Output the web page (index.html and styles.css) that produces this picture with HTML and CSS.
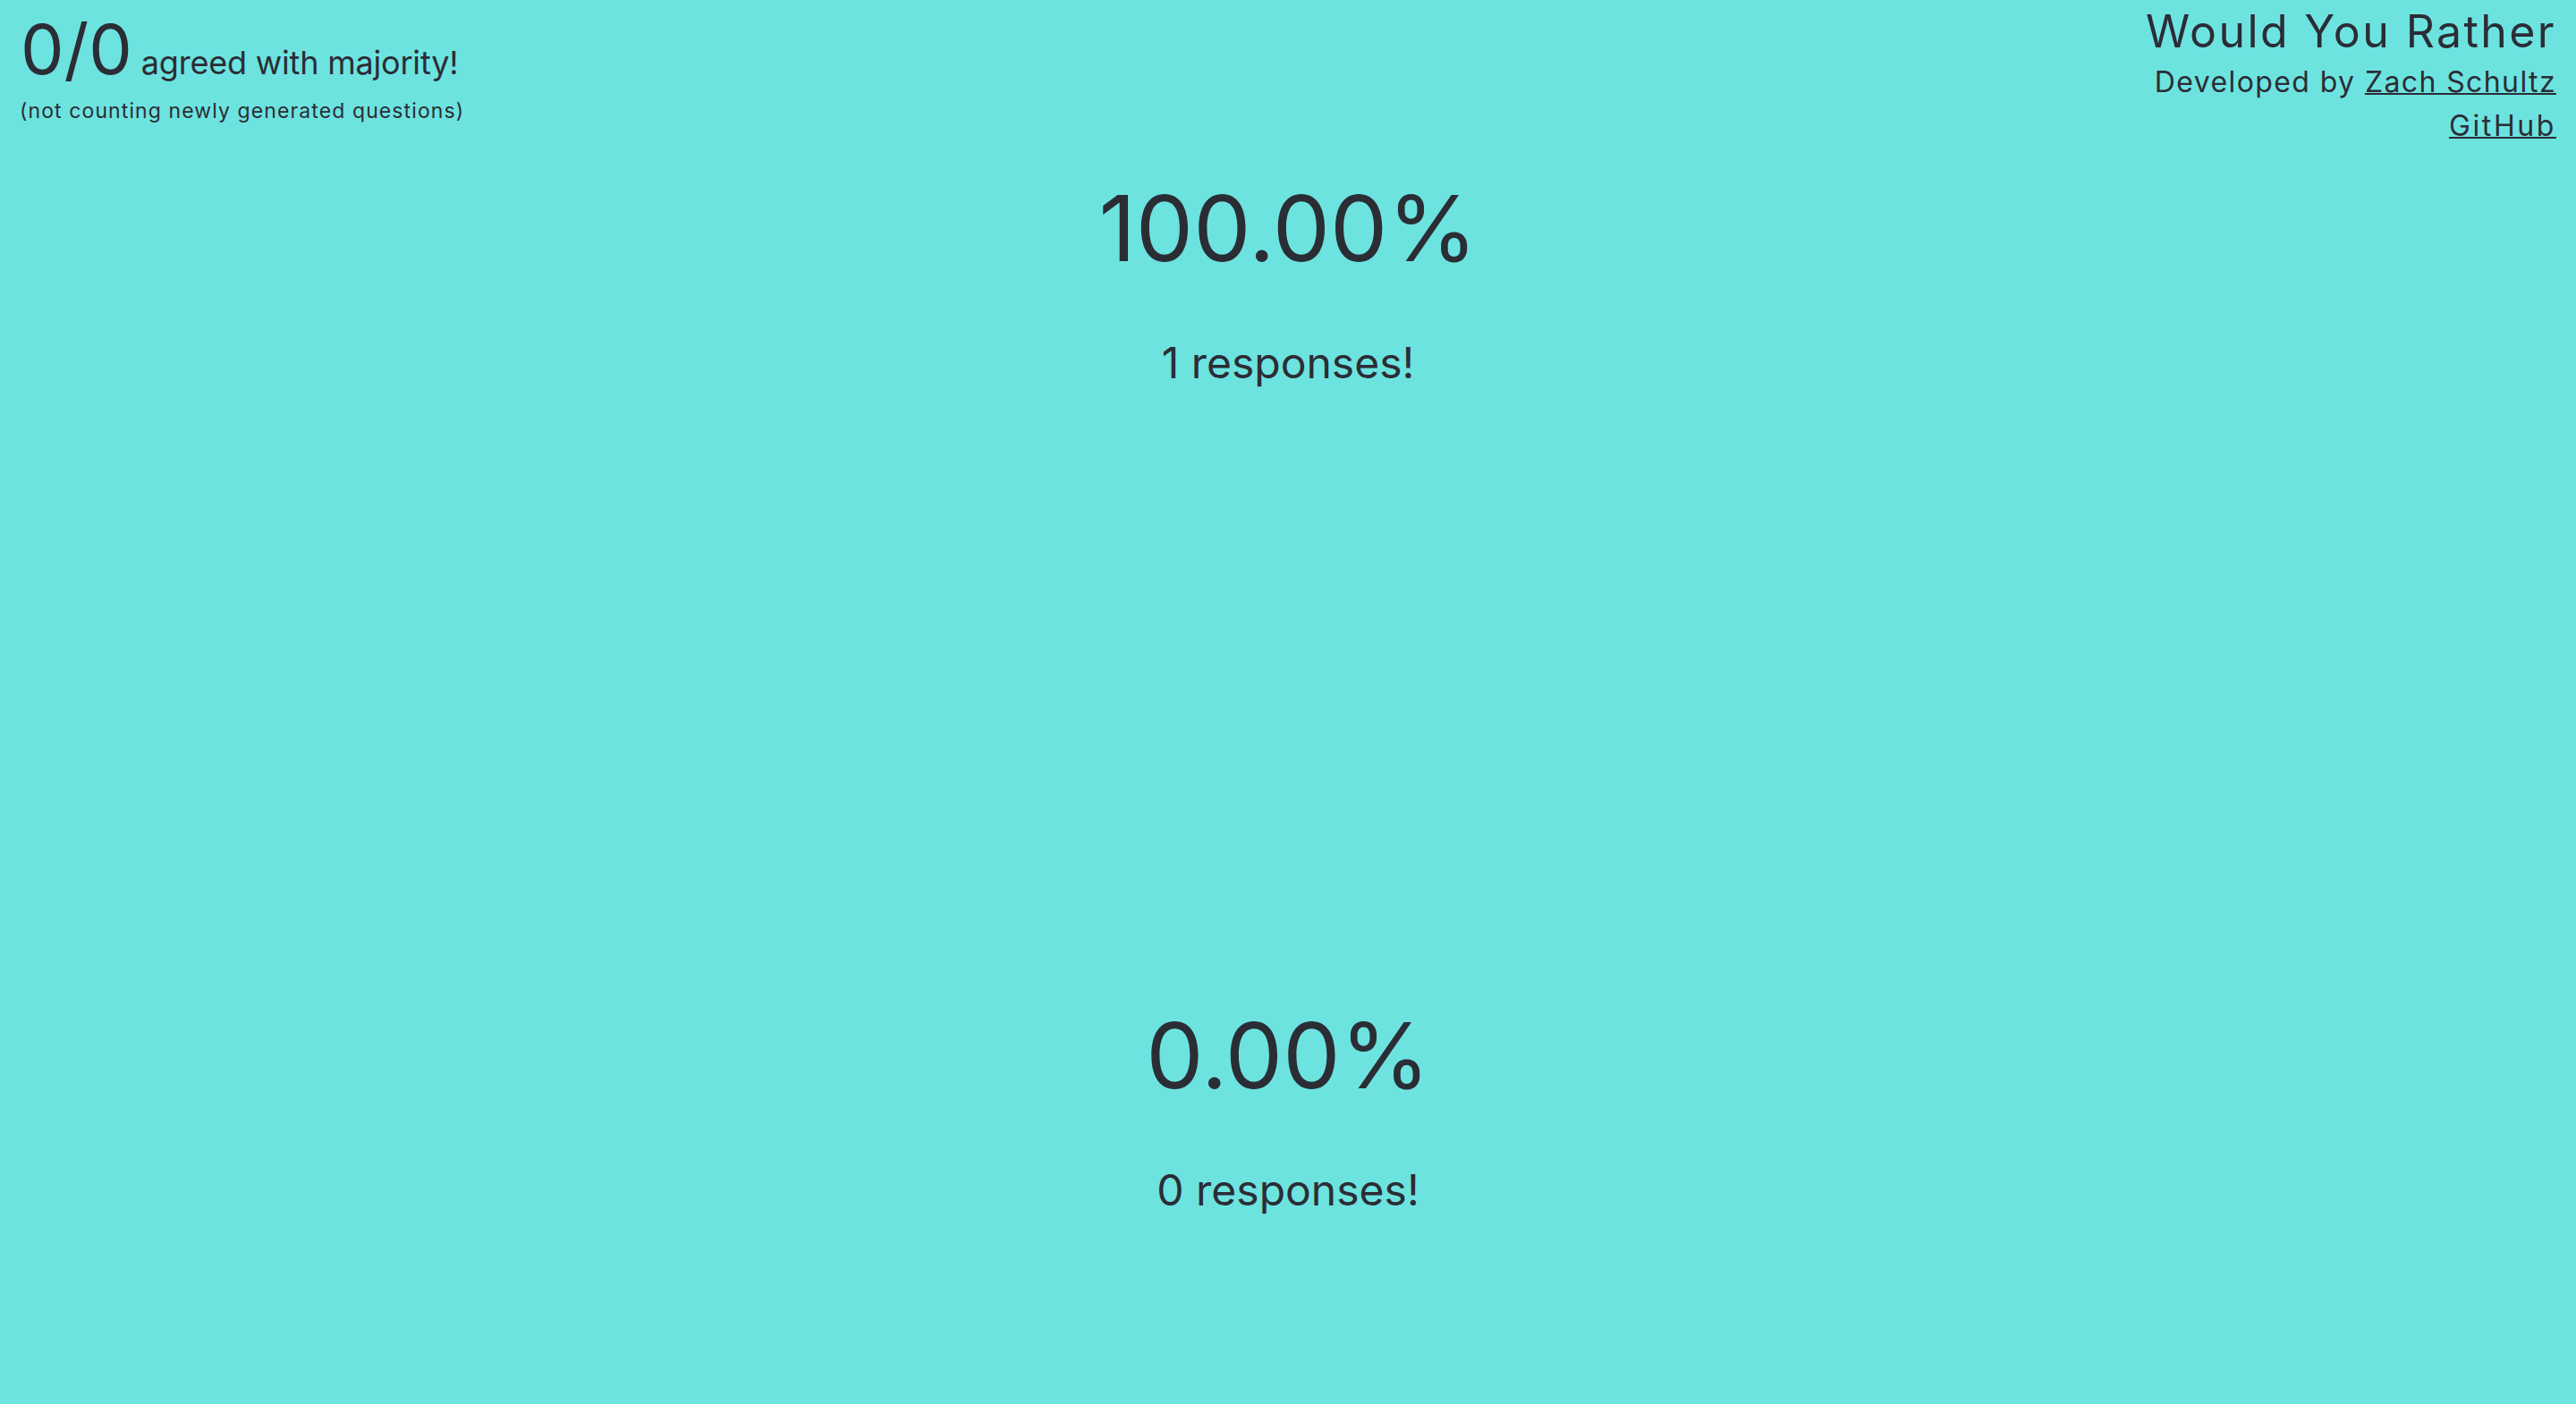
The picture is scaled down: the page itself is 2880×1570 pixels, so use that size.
FILE: index.html
```html
<!DOCTYPE html>
<html lang="en">
<head>
<meta charset="utf-8">
<title>Would You Rather</title>
<link rel="stylesheet" href="styles.css">
</head>
<body>
<header class="topbar">
  <div class="tally">
    <div class="tally-line"><span class="tally-num">0/0</span> agreed with majority!</div>
    <div class="tally-note">(not counting newly generated questions)</div>
  </div>
  <div class="credits">
    <div class="credits-title">Would You Rather</div>
    <div class="credits-line">Developed by <a href="#" class="credits-link">Zach Schultz</a></div>
    <div class="credits-line"><a href="#" class="credits-link credits-gh">GitHub</a></div>
  </div>
</header>
<main class="options">
  <section class="option">
    <div class="option-pct">100.00%</div>
    <div class="option-count">1 responses!</div>
  </section>
  <section class="option">
    <div class="option-pct">0.00%</div>
    <div class="option-count">0 responses!</div>
  </section>
</main>
</body>
</html>
```

FILE: styles.css
```css
html, body {
  margin: 0;
  padding: 0;
}
body {
  background: #6de3e0;
  color: #2b2d35;
  font-family: Inter, "Noto Sans", sans-serif;
  font-weight: 400;
}
.topbar {
  display: flex;
  justify-content: space-between;
  align-items: flex-start;
  height: 165px;
  padding: 0 22px 0 23px;
}
.tally {
  margin-top: 15px;
}
.tally-line {
  font-size: 36px;
  line-height: 80px;
  letter-spacing: -0.2px;
}
.tally-num {
  font-size: 77px;
  line-height: 80px;
  letter-spacing: 0;
}
.tally-note {
  font-size: 23px;
  line-height: 30px;
  margin-top: -1px;
  margin-left: -1px;
  letter-spacing: 1.1px;
}
.credits {
  margin-top: 5px;
  text-align: right;
}
.credits-title {
  font-size: 50px;
  line-height: 60px;
  letter-spacing: 2.4px;
}
.credits-line {
  font-size: 32px;
  line-height: 49px;
  letter-spacing: 1.4px;
}
.credits-gh {
  letter-spacing: 2.6px;
}
.credits-title + .credits-line {
  margin-top: 2px;
}
.credits-link {
  color: inherit;
  text-decoration: underline;
  text-decoration-thickness: 2px;
}
.option {
  height: 925px;
  padding-top: 30px;
  box-sizing: border-box;
  display: flex;
  flex-direction: column;
  align-items: center;
}
.option-pct {
  font-size: 102px;
  line-height: 120px;
}
.option-count {
  font-size: 48px;
  line-height: 60px;
  margin-top: 61px;
}
```
